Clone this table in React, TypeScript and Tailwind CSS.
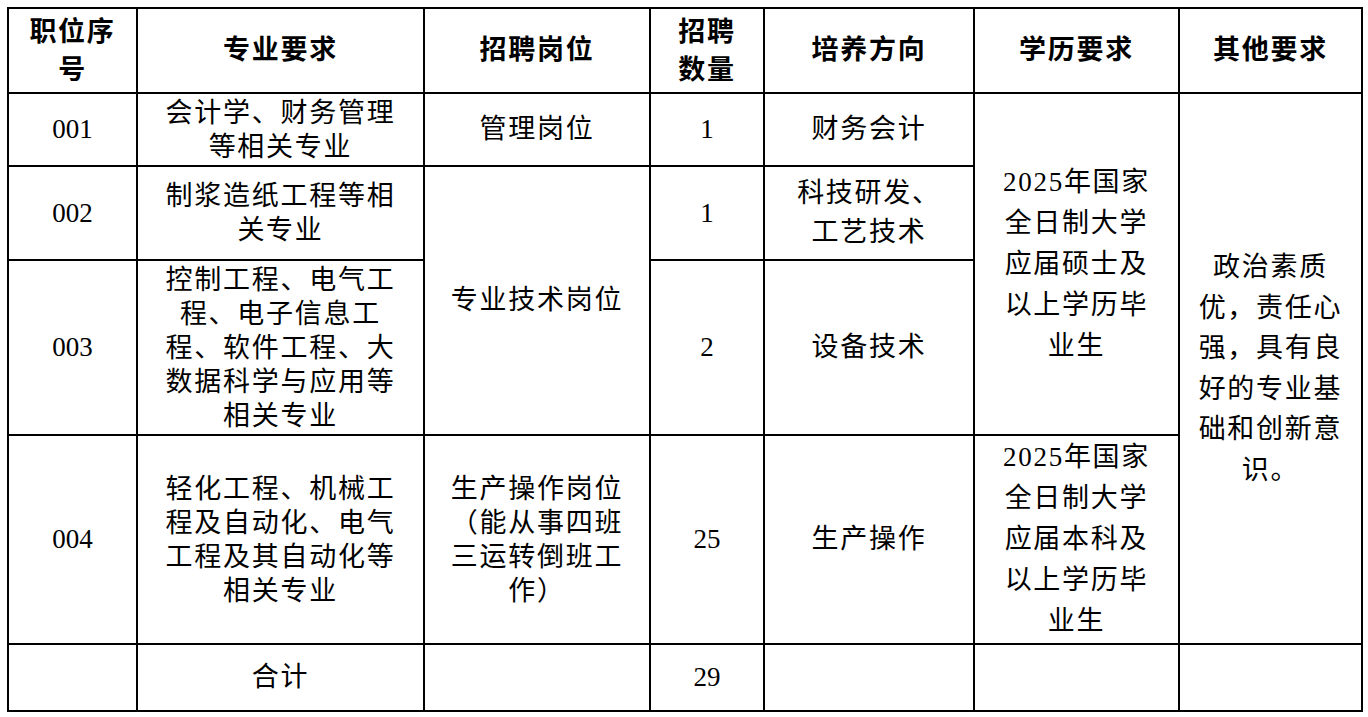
import React from "react";

const cjk = "tracking-[1.75px]";

function Lines({ lines, lh }: { lines: string[]; lh: string }) {
  return (
    <div className={`${lh} whitespace-nowrap`}>
      {lines.map((l, i) => (
        <div key={i}>{l}</div>
      ))}
    </div>
  );
}

export default function App() {
  const td = "border-2 border-black p-0 text-center align-middle";
  const th = "border-2 border-black p-0 text-center align-middle font-bold";
  return (
    <div
      className="bg-white w-[1368px] h-[717px] overflow-hidden text-black text-[27px]"
      style={{ fontFamily: '"Liberation Serif", "Noto Sans CJK SC", serif' }}
    >
      <table className="border-collapse table-fixed w-[1354px] ml-[7px] mt-[7px]">
        <colgroup>
          <col className="w-[129px]" />
          <col className="w-[287px]" />
          <col className="w-[226px]" />
          <col className="w-[114px]" />
          <col className="w-[210px]" />
          <col className="w-[205px]" />
          <col className="w-[183px]" />
        </colgroup>
        <tbody>
          <tr className="h-[85px]">
            <th className={`${th} ${cjk}`}>
              <Lines lines={["职位序", "号"]} lh="leading-[38px]" />
            </th>
            <th className={`${th} ${cjk}`}>专业要求</th>
            <th className={`${th} ${cjk}`}>招聘岗位</th>
            <th className={`${th} ${cjk}`}>
              <Lines lines={["招聘", "数量"]} lh="leading-[38px]" />
            </th>
            <th className={`${th} ${cjk}`}>培养方向</th>
            <th className={`${th} ${cjk}`}>学历要求</th>
            <th className={`${th} ${cjk}`}>其他要求</th>
          </tr>
          <tr className="h-[73px]">
            <td className={td}>001</td>
            <td className={`${td} ${cjk}`}>
              <Lines lines={["会计学、财务管理", "等相关专业"]} lh="leading-[34px]" />
            </td>
            <td className={`${td} ${cjk}`}>管理岗位</td>
            <td className={td}>1</td>
            <td className={`${td} ${cjk}`}>财务会计</td>
            <td className={`${td} ${cjk}`} rowSpan={3}>
              <Lines
                lines={["2025年国家", "全日制大学", "应届硕士及", "以上学历毕", "业生"]}
                lh="leading-[41px]"
              />
            </td>
            <td className={`${td} ${cjk}`} rowSpan={4}>
              <Lines
                lines={["政治素质", "优，责任心", "强，具有良", "好的专业基", "础和创新意", "识。"]}
                lh="leading-[40.5px]"
              />
            </td>
          </tr>
          <tr className="h-[94px]">
            <td className={td}>002</td>
            <td className={`${td} ${cjk}`}>
              <Lines lines={["制浆造纸工程等相", "关专业"]} lh="leading-[34px]" />
            </td>
            <td className={`${td} ${cjk}`} rowSpan={2}>
              专业技术岗位
            </td>
            <td className={td}>1</td>
            <td className={`${td} ${cjk}`}>
              <Lines lines={["科技研发、", "工艺技术"]} lh="leading-[39px]" />
            </td>
          </tr>
          <tr className="h-[175px]">
            <td className={td}>003</td>
            <td className={`${td} ${cjk}`}>
              <Lines
                lines={["控制工程、电气工", "程、电子信息工", "程、软件工程、大", "数据科学与应用等", "相关专业"]}
                lh="leading-[34px]"
              />
            </td>
            <td className={td}>2</td>
            <td className={`${td} ${cjk}`}>设备技术</td>
          </tr>
          <tr className="h-[209px]">
            <td className={td}>004</td>
            <td className={`${td} ${cjk}`}>
              <Lines
                lines={["轻化工程、机械工", "程及自动化、电气", "工程及其自动化等", "相关专业"]}
                lh="leading-[34px]"
              />
            </td>
            <td className={`${td} ${cjk}`}>
              <Lines
                lines={["生产操作岗位", "（能从事四班", "三运转倒班工", "作）"]}
                lh="leading-[34px]"
              />
            </td>
            <td className={td}>25</td>
            <td className={`${td} ${cjk}`}>生产操作</td>
            <td className={`${td} ${cjk}`}>
              <Lines
                lines={["2025年国家", "全日制大学", "应届本科及", "以上学历毕", "业生"]}
                lh="leading-[41px]"
              />
            </td>
          </tr>
          <tr className="h-[67px]">
            <td className={td}></td>
            <td className={`${td} ${cjk}`}>合计</td>
            <td className={td}></td>
            <td className={td}>29</td>
            <td className={td}></td>
            <td className={td}></td>
            <td className={td}></td>
          </tr>
        </tbody>
      </table>
    </div>
  );
}
